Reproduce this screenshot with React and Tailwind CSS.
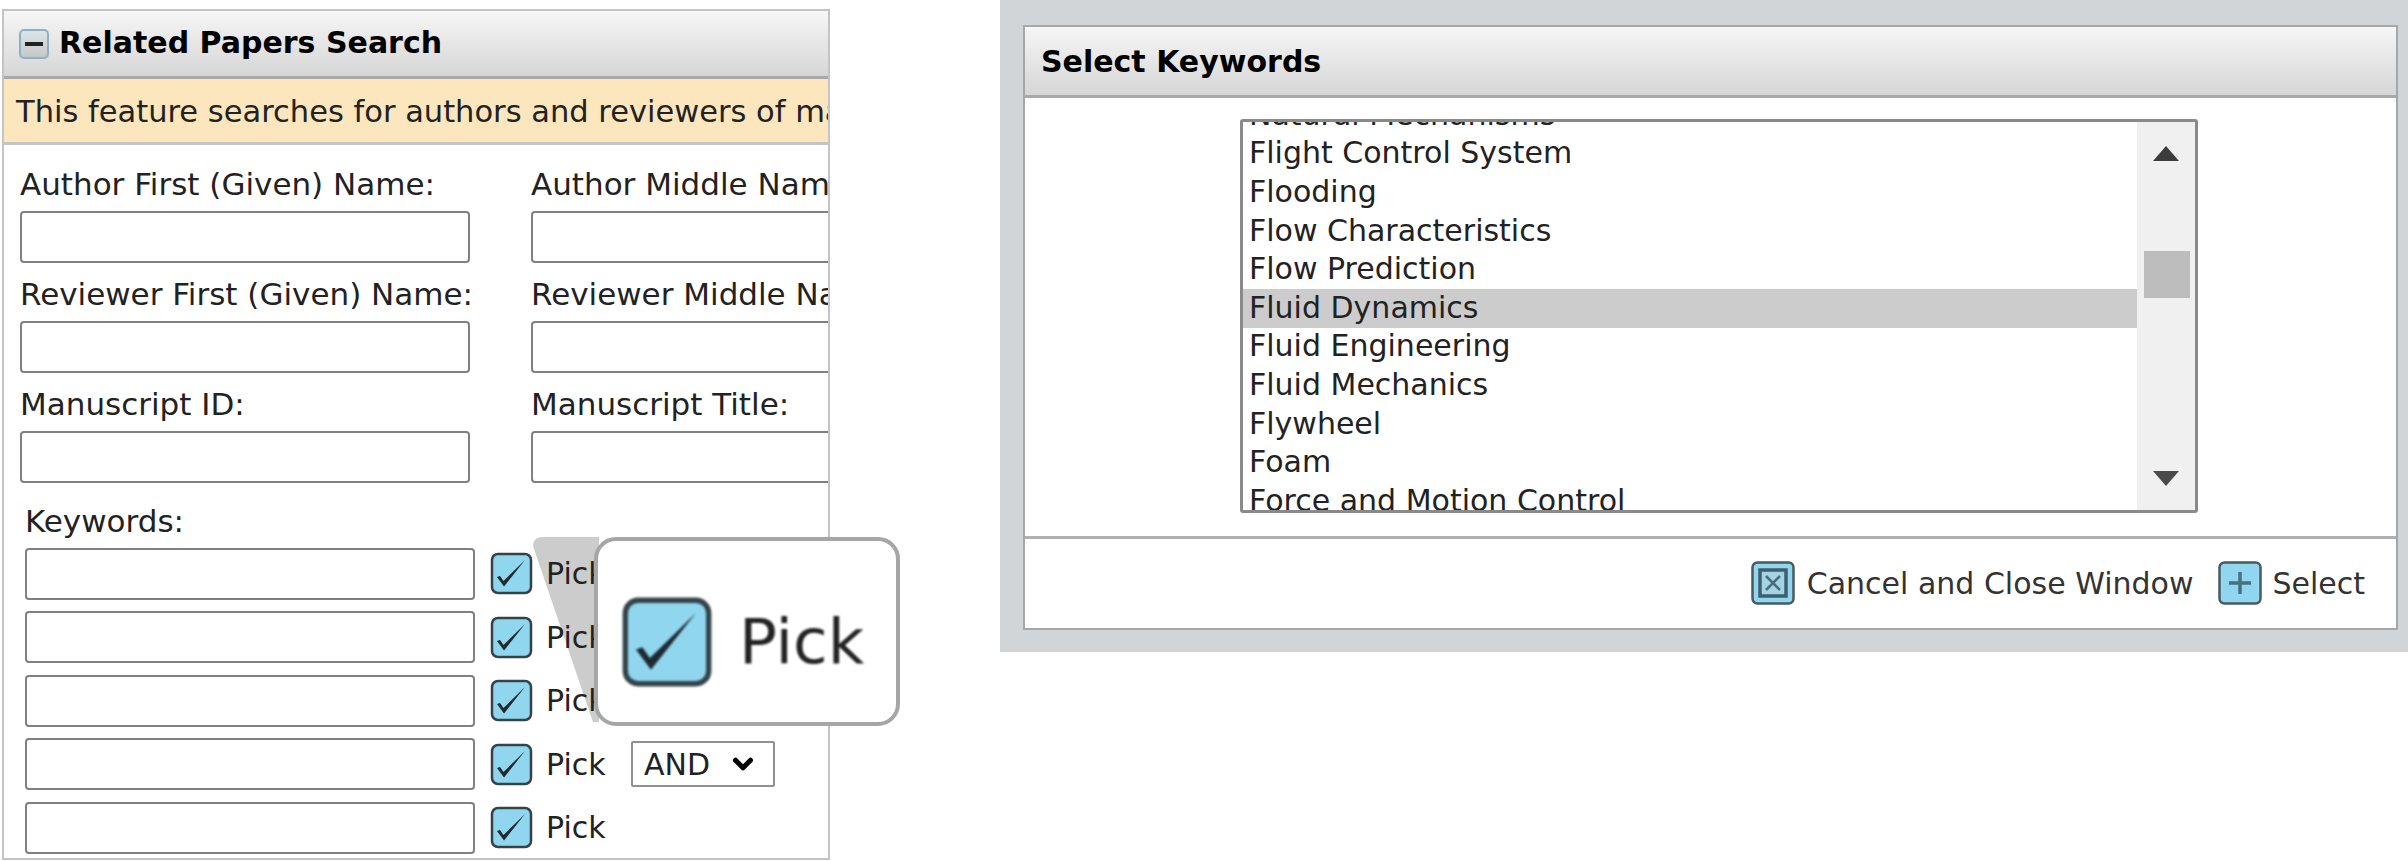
import { ChevronDown } from "lucide-react";

const font = "font-['DejaVu_Sans','Liberation_Sans',sans-serif]";

const fields = [
  { left: "Author First (Given) Name:", right: "Author Middle Name:" },
  { left: "Reviewer First (Given) Name:", right: "Reviewer Middle Name:" },
  { left: "Manuscript ID:", right: "Manuscript Title:" },
];

const keywords = [
  "Natural Mechanisms",
  "Flight Control System",
  "Flooding",
  "Flow Characteristics",
  "Flow Prediction",
  "Fluid Dynamics",
  "Fluid Engineering",
  "Fluid Mechanics",
  "Flywheel",
  "Foam",
  "Force and Motion Control",
];

function TextBox({ className }) {
  return <div className={`rounded-[4px] border-2 border-[#808080] bg-white ${className}`} />;
}

function CheckIcon({ className }) {
  return (
    <svg viewBox="0 0 43 43" className={className}>
      <rect x="2" y="2" width="39" height="39" rx="6" fill="#8fd6ee" stroke="#34434a" strokeWidth="2.5" />
      <path d="M7 25 L10 24 L13.5 29 L35 8 L14 34.5 Z" fill="#1f2a30" />
    </svg>
  );
}

function CancelIcon() {
  return (
    <svg viewBox="0 0 44 44" className="h-[44px] w-[44px]">
      <rect x="1.5" y="1.5" width="41" height="41" rx="5" fill="#8fd6ee" stroke="#4a5a60" strokeWidth="2.5" />
      <rect x="9" y="9" width="26" height="26" fill="#a4d3e3" stroke="#3f5f6f" strokeWidth="3.5" />
      <path d="M15 15 L29 29 M29 15 L15 29" stroke="#47707f" strokeWidth="2.5" />
    </svg>
  );
}

function PlusIcon() {
  return (
    <svg viewBox="0 0 44 44" className="h-[44px] w-[44px]">
      <rect x="1.5" y="1.5" width="41" height="41" rx="5" fill="#8fd6ee" stroke="#4a5a60" strokeWidth="2.5" />
      <path d="M22 11 V33 M11 22 H33" stroke="#47707f" strokeWidth="3.5" />
    </svg>
  );
}

function KeywordRow({ showAnd }) {
  return (
    <div className="flex h-[52px] items-center">
      <TextBox className="h-[52px] w-[450px] shrink-0" />
      <CheckIcon className="ml-[15px] h-[43px] w-[43px] shrink-0" />
      <span className="relative z-10 ml-[13px] w-[58px] text-[30px] text-[#222]">Pick</span>
      {showAnd && (
        <div className="ml-[27px] flex h-[46px] w-[144px] items-center justify-between rounded-[2px] border-2 border-[#909090] pl-[11px] pr-[15px] text-[30px] text-[#222]">
          AND
          <ChevronDown className="h-[30px] w-[30px] text-black" strokeWidth={4} />
        </div>
      )}
    </div>
  );
}

function RelatedPapers() {
  return (
    <section className="ml-[2px] mt-[9px] h-[851px] w-[828px] shrink-0 border-2 border-[#c4c4c4] bg-white">
      <div className="flex h-[68px] items-center gap-[10px] border-b-[3px] border-[#a9a9a9] bg-gradient-to-b from-[#f6f6f6] to-[#d6d6d6] pl-[15px]">
        <span className="flex h-[30px] w-[30px] items-center justify-center rounded-[5px] border-2 border-[#8fb0c4] bg-gradient-to-b from-[#dde4e8] to-[#c4c8c8]">
          <span className="h-[4px] w-[18px] bg-[#222]" />
        </span>
        <h2 className="-mt-[2px] text-[30px] font-bold text-black">Related Papers Search</h2>
      </div>
      <div className="flex h-[66px] items-center overflow-hidden whitespace-nowrap border-b-[3px] border-[#c4c4c4] bg-[#fce6bd] pl-[12px] pt-[3px] text-[30.5px] text-[#222]">
        This feature searches for authors and reviewers of manuscripts
      </div>
      <div className="grid w-[824px] grid-cols-[511px_297px] overflow-hidden pl-[16px] pt-[22px]">
        {fields.map((f) => (
          <div key={f.left} className="col-span-2 grid h-[110px] grid-cols-subgrid">
            <div>
              <div className="h-[44px] whitespace-nowrap text-[31px] leading-[35px] text-[#222]">{f.left}</div>
              <TextBox className="h-[52px] w-[450px]" />
            </div>
            <div className="overflow-hidden">
              <div className="h-[44px] whitespace-nowrap text-[31px] leading-[35px] text-[#222]">{f.right}</div>
              <TextBox className="h-[52px] w-[400px]" />
            </div>
          </div>
        ))}
      </div>
      <div className="relative pl-[21px] pt-[6px]">
        <div className="h-[44.5px] text-[31px] leading-[36px] text-[#222]">Keywords:</div>
        <div className="flex flex-col gap-[11.5px]">
          <KeywordRow />
          <KeywordRow />
          <KeywordRow />
          <KeywordRow showAnd />
          <KeywordRow />
        </div>
        {/* zoom callout over the first three rows */}
        <svg viewBox="0 0 70 190" className="absolute left-[527px] top-[39px] h-[190px] w-[70px]">
          <path d="M2 10 Q2 1 12 1 L68 1 L68 186 L62 186 Z" fill="#cccccc" />
        </svg>
        <div className="absolute left-[590px] top-[40px] z-20 flex h-[189px] w-[306px] items-center rounded-[22px] border-4 border-[#a6a6a6] bg-white pl-[23px] pt-[20px]">
          <CheckIcon className="h-[92px] w-[92px] shrink-0 blur-[1px]" />
          <span className="ml-[26px] text-[63px] leading-none text-[#222] blur-[1px]">Pick</span>
        </div>
      </div>
    </section>
  );
}

function SelectKeywords() {
  return (
    <section className="ml-[170px] h-[652px] flex-1 bg-[#d1d5d8] pl-[23px] pr-[10px] pt-[25px]">
      <div className="h-[605px] border-2 border-[#a4a8aa] bg-white">
        <div className="flex h-[71px] items-center border-b-[3px] border-[#a9a9a9] bg-gradient-to-b from-[#f6f6f6] to-[#d6d6d6] pl-[16px]">
          <h2 className="text-[30px] font-bold text-black">Select Keywords</h2>
        </div>
        <div className="h-[441px] border-b-[3px] border-[#b0b0b0] pl-[215px] pt-[21px]">
          <div className="flex h-[394px] w-[958px] overflow-hidden rounded-[3px] border-[3px] border-[#8a8a8a]">
            <ul className="min-w-0 flex-1 overflow-hidden">
              {keywords.map((k, i) => (
                <li
                  key={k}
                  className={`flex h-[38.6px] items-center whitespace-nowrap pb-[2px] pl-[6px] text-[30px] text-[#222] ${
                    i === 0 ? "-mt-[26px]" : ""
                  } ${k === "Fluid Dynamics" ? "bg-[#cccccc]" : ""}`}
                >
                  {k}
                </li>
              ))}
            </ul>
            <div className="relative w-[58px] shrink-0 bg-[#f0f0f0]">
              <span className="absolute left-[16px] top-[24px] h-0 w-0 border-x-[13px] border-b-[15px] border-x-transparent border-b-[#3c3c3c]" />
              <span className="absolute left-[7px] top-[129px] h-[47px] w-[46px] bg-[#bdbdbd]" />
              <span className="absolute bottom-[24px] left-[16px] h-0 w-0 border-x-[13px] border-t-[15px] border-x-transparent border-t-[#4a4a4a]" />
            </div>
          </div>
        </div>
        <div className="flex h-[88px] items-center justify-end pr-[31px] text-[30px] text-[#333]">
          <CancelIcon />
          <span className="ml-[12px]">Cancel and Close Window</span>
          <span className="ml-[25px]"><PlusIcon /></span>
          <span className="ml-[10px]">Select</span>
        </div>
      </div>
    </section>
  );
}

export default function App() {
  return (
    <main className={`flex h-[861px] w-[2408px] items-start overflow-hidden bg-white ${font}`}>
      <RelatedPapers />
      <SelectKeywords />
    </main>
  );
}
